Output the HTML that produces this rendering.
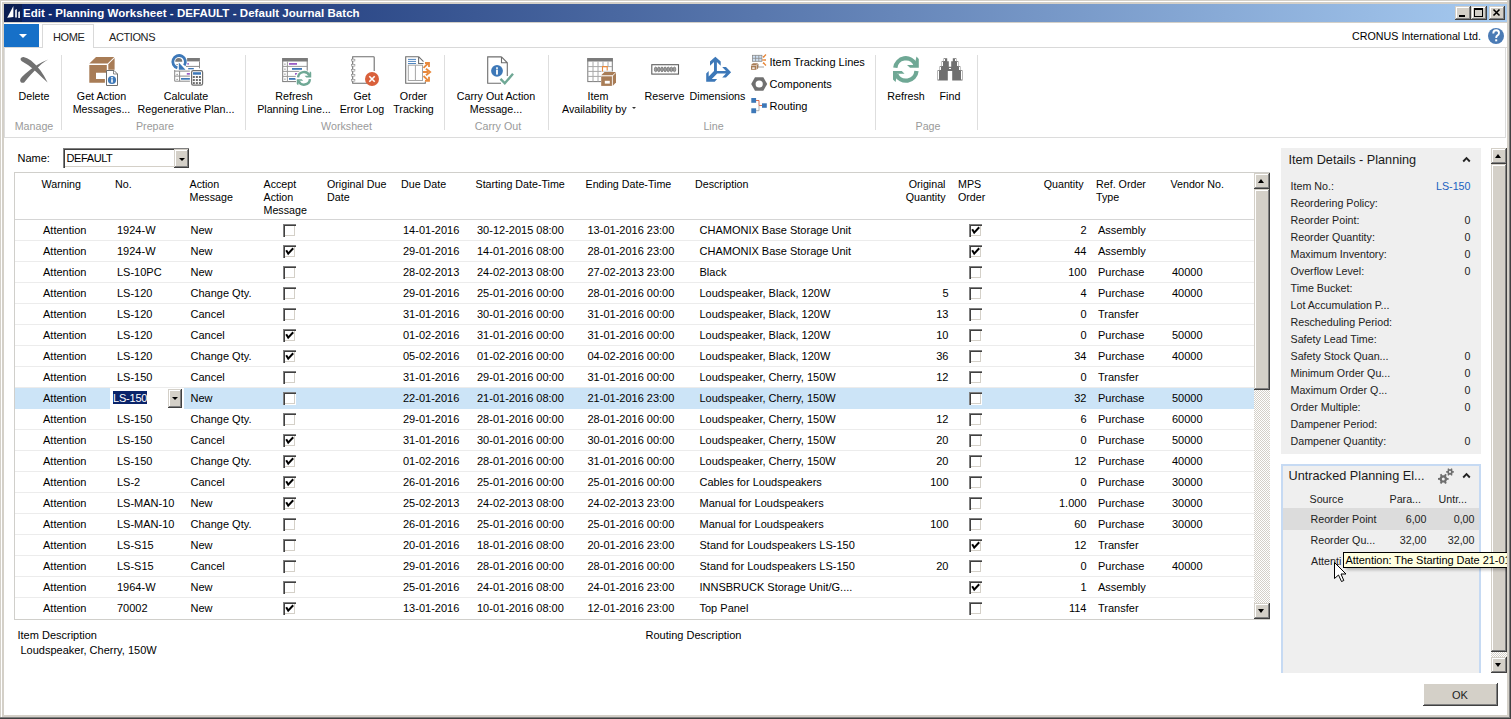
<!DOCTYPE html><html><head><meta charset="utf-8"><style>
html,body{margin:0;padding:0;}
body{width:1511px;height:719px;overflow:hidden;position:relative;background:#d4d0c8;font-family:"Liberation Sans",sans-serif;}
.t{position:absolute;white-space:nowrap;line-height:13px;font-family:"Liberation Sans",sans-serif;}
</style></head><body>
<div style="position:absolute;left:0px;top:0px;width:1511px;height:719px;background:#d4d0c8"></div>
<div style="position:absolute;left:1px;top:1px;width:1508px;height:1px;background:#fff"></div>
<div style="position:absolute;left:1px;top:1px;width:1px;height:716px;background:#fff"></div>
<div style="position:absolute;left:0px;top:717px;width:1511px;height:1px;background:#808080"></div>
<div style="position:absolute;left:0px;top:718px;width:1511px;height:1px;background:#404040"></div>
<div style="position:absolute;left:1509px;top:0px;width:1px;height:718px;background:#808080"></div>
<div style="position:absolute;left:1510px;top:0px;width:1px;height:719px;background:#404040"></div>
<div style="position:absolute;left:4px;top:23px;width:1503px;height:692px;background:#fff"></div>
<div style="position:absolute;left:4px;top:4px;width:1503px;height:18px;background:linear-gradient(to right,#0a246a,#a6caf0)"></div>
<svg style="position:absolute;left:4px;top:4px" width="18" height="18" viewBox="4 4 18 18"><rect x="4" y="4" width="18" height="18" fill="#0b1e52"/><path d="M7.2,17.8 L13.4,6 L13.4,17Z" fill="#fff"/><path d="M15.2,17.5 L15.2,10 L16.8,9 L16.8,17.5Z" fill="#fff"/><path d="M18.3,18 L18.3,12 L19.9,11.2 L19.9,18Z" fill="#fff"/></svg>
<div class="t" style="left:23px;top:7px;font-size:11.5px;color:#fff;font-weight:bold;letter-spacing:0.05px">Edit - Planning Worksheet - DEFAULT - Default Journal Batch</div>
<div style="position:absolute;left:1455px;top:6px;width:16px;height:14px;background:#d4d0c8;box-shadow:inset -1px -1px #404040, inset 1px 1px #d4d0c8, inset -2px -2px #808080, inset 2px 2px #fff;"></div>
<div style="position:absolute;left:1471px;top:6px;width:16px;height:14px;background:#d4d0c8;box-shadow:inset -1px -1px #404040, inset 1px 1px #d4d0c8, inset -2px -2px #808080, inset 2px 2px #fff;"></div>
<div style="position:absolute;left:1489px;top:6px;width:16px;height:14px;background:#d4d0c8;box-shadow:inset -1px -1px #404040, inset 1px 1px #d4d0c8, inset -2px -2px #808080, inset 2px 2px #fff;"></div>
<div style="position:absolute;left:1459px;top:15px;width:6px;height:2px;background:#000"></div>
<div style="position:absolute;left:1474px;top:8px;width:9px;height:9px;border:1px solid #000;border-top-width:2px;box-sizing:border-box"></div>
<svg style="position:absolute;left:1489px;top:6px" width="16" height="14" viewBox="0 0 16 14"><path d="M4.5,3.5 L10.5,9.5 M10.5,3.5 L4.5,9.5" stroke="#000" stroke-width="1.6"/></svg>
<div style="position:absolute;left:4px;top:24px;width:35px;height:23px;background:#1670c8"></div>
<div style="position:absolute;left:18.8px;top:34px;width:0;height:0;border-left:4px solid transparent;border-right:4px solid transparent;border-top:4.5px solid #fff"></div>
<div style="position:absolute;left:4px;top:47px;width:1503px;height:1px;background:#d9d9d9"></div>
<div style="position:absolute;left:42px;top:24px;width:52px;height:24px;background:#fff;border:1px solid #d9d9d9;border-bottom:none;box-sizing:border-box"></div>
<div class="t" style="left:53px;top:31px;font-size:11px;color:#222;font-weight:normal;letter-spacing:-0.4px">HOME</div>
<div class="t" style="left:109px;top:31px;font-size:11px;color:#222;font-weight:normal;letter-spacing:-0.4px">ACTIONS</div>
<div class="t" style="right:30px;top:30px;font-size:10.7px;color:#000;font-weight:normal;">CRONUS International Ltd.</div>
<svg style="position:absolute;left:1486px;top:26px" width="20" height="20" viewBox="1486 26 20 20"><circle cx="1496" cy="36" r="8" fill="#4b7bb5"/><path d="M1493.3,33.5 Q1493.3,30.3 1496.2,30.3 Q1499,30.3 1499,33 Q1499,34.6 1497.2,35.6 Q1496.2,36.3 1496.2,38" fill="none" stroke="#fff" stroke-width="1.9"/><rect x="1495.2" y="39.3" width="2" height="2" fill="#fff"/></svg>
<div style="position:absolute;left:4px;top:47px;width:1502px;height:91px;border:1px solid #dcdcdc;border-top:none;box-sizing:border-box"></div>
<div style="position:absolute;left:61px;top:55px;width:1px;height:75px;background:#dedede"></div>
<div style="position:absolute;left:245px;top:55px;width:1px;height:75px;background:#dedede"></div>
<div style="position:absolute;left:444px;top:55px;width:1px;height:75px;background:#dedede"></div>
<div style="position:absolute;left:548px;top:55px;width:1px;height:75px;background:#dedede"></div>
<div style="position:absolute;left:875px;top:55px;width:1px;height:75px;background:#dedede"></div>
<div style="position:absolute;left:977px;top:55px;width:1px;height:75px;background:#dedede"></div>
<div class="t" style="left:-166px;width:400px;text-align:center;top:119.5px;font-size:10.7px;color:#9a9a9a;font-weight:normal;">Manage</div>
<div class="t" style="left:-45px;width:400px;text-align:center;top:119.5px;font-size:10.7px;color:#9a9a9a;font-weight:normal;">Prepare</div>
<div class="t" style="left:146.5px;width:400px;text-align:center;top:119.5px;font-size:10.7px;color:#9a9a9a;font-weight:normal;">Worksheet</div>
<div class="t" style="left:298px;width:400px;text-align:center;top:119.5px;font-size:10.7px;color:#9a9a9a;font-weight:normal;">Carry Out</div>
<div class="t" style="left:513.5px;width:400px;text-align:center;top:119.5px;font-size:10.7px;color:#9a9a9a;font-weight:normal;">Line</div>
<div class="t" style="left:728px;width:400px;text-align:center;top:119.5px;font-size:10.7px;color:#9a9a9a;font-weight:normal;">Page</div>
<div class="t" style="left:-166px;width:400px;text-align:center;top:90px;font-size:10.7px;color:#000;font-weight:normal;">Delete</div>
<div class="t" style="left:-98.5px;width:400px;text-align:center;top:90px;font-size:10.7px;color:#000;font-weight:normal;">Get Action</div>
<div class="t" style="left:-98.5px;width:400px;text-align:center;top:102.8px;font-size:10.7px;color:#000;font-weight:normal;">Messages...</div>
<div class="t" style="left:-14px;width:400px;text-align:center;top:90px;font-size:10.7px;color:#000;font-weight:normal;">Calculate</div>
<div class="t" style="left:-14px;width:400px;text-align:center;top:102.8px;font-size:10.7px;color:#000;font-weight:normal;">Regenerative Plan...</div>
<div class="t" style="left:94px;width:400px;text-align:center;top:90px;font-size:10.7px;color:#000;font-weight:normal;">Refresh</div>
<div class="t" style="left:94px;width:400px;text-align:center;top:102.8px;font-size:10.7px;color:#000;font-weight:normal;">Planning Line...</div>
<div class="t" style="left:162px;width:400px;text-align:center;top:90px;font-size:10.7px;color:#000;font-weight:normal;">Get</div>
<div class="t" style="left:162px;width:400px;text-align:center;top:102.8px;font-size:10.7px;color:#000;font-weight:normal;">Error Log</div>
<div class="t" style="left:213.5px;width:400px;text-align:center;top:90px;font-size:10.7px;color:#000;font-weight:normal;">Order</div>
<div class="t" style="left:213.5px;width:400px;text-align:center;top:102.8px;font-size:10.7px;color:#000;font-weight:normal;">Tracking</div>
<div class="t" style="left:296px;width:400px;text-align:center;top:90px;font-size:10.7px;color:#000;font-weight:normal;">Carry Out Action</div>
<div class="t" style="left:296px;width:400px;text-align:center;top:102.8px;font-size:10.7px;color:#000;font-weight:normal;">Message...</div>
<div class="t" style="left:398px;width:400px;text-align:center;top:90px;font-size:10.7px;color:#000;font-weight:normal;">Item</div>
<div class="t" style="left:562px;top:102.8px;font-size:10.7px;color:#000;font-weight:normal;">Availability by</div>
<div style="position:absolute;left:632px;top:107px;width:0;height:0;border-left:2px solid transparent;border-right:2px solid transparent;border-top:2px solid #333"></div>
<div class="t" style="left:464.5px;width:400px;text-align:center;top:90px;font-size:10.7px;color:#000;font-weight:normal;">Reserve</div>
<div class="t" style="left:517.5px;width:400px;text-align:center;top:90px;font-size:10.7px;color:#000;font-weight:normal;">Dimensions</div>
<div class="t" style="left:706px;width:400px;text-align:center;top:90px;font-size:10.7px;color:#000;font-weight:normal;">Refresh</div>
<div class="t" style="left:750px;width:400px;text-align:center;top:90px;font-size:10.7px;color:#000;font-weight:normal;">Find</div>
<div class="t" style="left:769.5px;top:56px;font-size:11px;color:#000;font-weight:normal;">Item Tracking Lines</div>
<div class="t" style="left:769.5px;top:78px;font-size:11px;color:#000;font-weight:normal;">Components</div>
<div class="t" style="left:769.5px;top:100px;font-size:11px;color:#000;font-weight:normal;">Routing</div>
<svg style="position:absolute;left:15px;top:52px" width="40" height="36" viewBox="15 52 40 36"><path d="M23.5,56.9 Q27,57.5 31,60.5 Q36,64.5 40.5,70.5 Q44.5,76 47.6,82.6 Q43,78.5 38.5,74 Q33,68.5 28,65 Q24.5,62.7 21.8,61.3 Q20.2,60.2 20.6,58.6 Q21.3,56.8 23.5,56.9Z" fill="#717171"/><path d="M48.2,59.5 Q43,61.5 37.5,64.8 Q30.5,69 25,74 Q21.8,76.8 20.4,79 Q19.6,81 20.8,82.3 Q22.5,83.3 24.2,82.4 Q27,79 30.5,75 Q36,69 41.5,64 Q45,61 48.2,59.5Z" fill="#717171"/></svg>
<svg style="position:absolute;left:84px;top:50px" width="40" height="40" viewBox="84 50 40 40"><path d="M89.3,63.6 L96,57 L114.3,57 L107.6,63.6Z" fill="#a87c56"/><path d="M108.3,64.3 L114.6,58 L114.6,69.7 L108.3,69.7Z" fill="#a87c56"/><path d="M89.3,65 L106.8,65 L106.8,72.8 L96,72.8 L96,79 L104.9,79 L104.9,82.8 L89.3,82.8Z" fill="#a87c56"/><path d="M106.5,70.5 L114,70.5 L117.5,74 L117.5,85.5 L106.5,85.5Z" fill="#fff" stroke="#6e6e6e" stroke-width="1"/><path d="M113.5,70.5 L113.5,74 L117.5,74" fill="none" stroke="#6e6e6e" stroke-width="0.8"/><circle cx="112" cy="80" r="4.1" fill="#3d78b8"/><rect x="111.2" y="77" width="1.6" height="1.5" fill="#fff"/><rect x="111.2" y="79.2" width="1.6" height="3.4" fill="#fff"/></svg>
<svg style="position:absolute;left:166px;top:50px" width="40" height="40" viewBox="166 50 40 40"><rect x="187.1" y="58" width="12.8" height="3.4" fill="#7a7a7a"/><path d="M199.5,61.4 L199.5,68.3 M186,66.4 L199.5,66.4" stroke="#8a8a8a" stroke-width="1" fill="none"/><rect x="187.4" y="63" width="1.4" height="1.7" fill="#9b5cc6"/><rect x="188.2" y="68" width="5.6" height="1.3" fill="#3d78b8"/><path d="M174.7,70 L174.7,81.2 L189.9,81.2 M174.7,71.1 L189.9,71.1 M174.7,76.1 L189.9,76.1 M179.6,71 L179.6,81.2" fill="none" stroke="#8a8a8a" stroke-width="1"/><rect x="186.8" y="73" width="3.1" height="1.7" fill="#9b5cc6"/><rect x="181" y="78" width="8.9" height="1.7" fill="#3d78b8"/><rect x="176.3" y="73.9" width="1.7" height="0.8" fill="#888"/><rect x="176.3" y="78.9" width="1.7" height="0.8" fill="#888"/><rect x="191.6" y="70.6" width="11" height="14.6" rx="1.6" fill="#fff" stroke="#6e6e6e" stroke-width="1.2"/><rect x="193" y="72.2" width="8" height="2.5" fill="#3d78b8"/><rect x="192.8" y="76.0" width="2" height="2" fill="#6a6a6a"/><rect x="192.8" y="79.05" width="2" height="2" fill="#6a6a6a"/><rect x="192.8" y="82.1" width="2" height="2" fill="#6a6a6a"/><rect x="195.85000000000002" y="76.0" width="2" height="2" fill="#6a6a6a"/><rect x="195.85000000000002" y="79.05" width="2" height="2" fill="#6a6a6a"/><rect x="195.85000000000002" y="82.1" width="2" height="2" fill="#6a6a6a"/><rect x="198.9" y="76.0" width="2" height="2" fill="#6a6a6a"/><rect x="198.9" y="79.05" width="2" height="2" fill="#6a6a6a"/><rect x="198.9" y="82.1" width="2" height="2" fill="#6a6a6a"/><path d="M177.4,67.9 A6.3,6.3 0 1,1 184.3,65.4" fill="none" stroke="#3d78b8" stroke-width="2.8"/><path d="M175.2,61.7 A3.5,3.6 0 0,1 182.3,61.7 Z" fill="#7a7a7a"/><path d="M178.8,62.5 L178.8,69.7 L185.5,69.7Z" fill="#3d78b8"/><rect x="176.3" y="64" width="1.7" height="0.8" fill="#888"/></svg>
<svg style="position:absolute;left:278px;top:52px" width="40" height="40" viewBox="278 52 40 40"><rect x="282.7" y="58.6" width="24.5" height="23" fill="#fff" stroke="#7a7a7a" stroke-width="1"/><rect x="282.2" y="58.1" width="25.5" height="3.4" fill="#7a7a7a"/><path d="M282.7,66.4 L307.2,66.4 M282.7,71.4 L307.2,71.4 M282.7,76.4 L307.2,76.4 M287.4,61.5 L287.4,81.6" stroke="#9a9a9a" stroke-width="1"/><rect x="284" y="63.7" width="1.8" height="0.8" fill="#8a8a8a"/><rect x="284" y="68.7" width="1.8" height="0.8" fill="#8a8a8a"/><rect x="284" y="73.7" width="1.8" height="0.8" fill="#8a8a8a"/><rect x="284" y="78.7" width="1.8" height="0.8" fill="#8a8a8a"/><rect x="289" y="63" width="8" height="1.8" fill="#9b5cc6"/><rect x="292" y="68" width="10" height="1.8" fill="#3d78b8"/><rect x="295" y="73" width="3" height="1.8" fill="#9b5cc6"/><rect x="289" y="78" width="7" height="1.8" fill="#3d78b8"/><circle cx="304" cy="78.3" r="8.6" fill="#fff"/><g transform="translate(304,78.3) scale(0.56) translate(-905.9,-69.4)"><path d="M895.3,67.8 A10.6,10.6 0 0,1 915.5,64.5" fill="none" stroke="#6fa895" stroke-width="4.3"/><path d="M916.5,56.6 L918.8,59 L918.8,67.8 L910,67.8 L907,65 L914.5,65Z" fill="#6fa895"/><path d="M916.5,71 A10.6,10.6 0 0,1 896.2,74.3" fill="none" stroke="#6fa895" stroke-width="4.3"/><path d="M895.6,82 L893,79.5 L893,71 L901.8,71 L904.5,73.8 L897,73.8Z" fill="#6fa895"/></g></svg>
<svg style="position:absolute;left:345px;top:52px" width="40" height="40" viewBox="345 52 40 40"><path d="M368,83.2 L352.7,83.2 L352.7,56.7 L373.5,56.7 Q374.2,56.7 374.2,57.5 L374.2,71" fill="none" stroke="#6e6e6e" stroke-width="1.1"/><rect x="351.5" y="59.2" width="3.4" height="1.8" fill="#fff" stroke="#8a8a8a" stroke-width="0.6"/><rect x="351.5" y="64.3" width="3.4" height="1.8" fill="#fff" stroke="#8a8a8a" stroke-width="0.6"/><rect x="351.5" y="69.3" width="3.4" height="1.8" fill="#fff" stroke="#8a8a8a" stroke-width="0.6"/><rect x="351.5" y="74.3" width="3.4" height="1.8" fill="#fff" stroke="#8a8a8a" stroke-width="0.6"/><rect x="351.5" y="79.3" width="3.4" height="1.8" fill="#fff" stroke="#8a8a8a" stroke-width="0.6"/><circle cx="372" cy="79" r="7" fill="#d9603b"/><path d="M369.3,76.3 L374.7,81.7 M374.7,76.3 L369.3,81.7" stroke="#fff" stroke-width="1.6"/></svg>
<svg style="position:absolute;left:398px;top:52px" width="40" height="40" viewBox="398 52 40 40"><path d="M418.6,56.7 L405.7,56.7 L405.7,83.2 L425.3,83.2 L425.3,81.5 M418.6,56.7 L423.5,61.7 M418.6,56.7 L418.6,63.5 L423.5,63.5" fill="none" stroke="#6e6e6e" stroke-width="1.1"/><path d="M408,59.4 L416,59.4 M408,61.4 L416,61.4 M408,63.5 L416,63.5" stroke="#3d78b8" stroke-width="0.9"/><rect x="408.3" y="65.2" width="14.2" height="15.3" fill="none" stroke="#a5a5a5" stroke-width="1"/><path d="M415.4,65.2 L415.4,80.5" stroke="#a5a5a5" stroke-width="1"/><path d="M423.5,67.8 L428.5,63 M425,63 L429,63 L429,67" fill="none" stroke="#e8893c" stroke-width="1.8"/><path d="M423,72 L428,72 M426,68.8 L430,72 L426,75.2" fill="none" stroke="#e8893c" stroke-width="2"/><path d="M423.5,76 L428.5,80.8 M425,80.8 L429,80.8 L429,76.8" fill="none" stroke="#e8893c" stroke-width="1.8"/></svg>
<svg style="position:absolute;left:480px;top:50px" width="40" height="40" viewBox="480 50 40 40"><path d="M501.5,56.9 L487.7,56.9 L487.7,83.2 L501,83.2 M501.5,56.9 L507.3,62.8 L507.3,76 M501.5,56.9 L501.5,62.8 L507.3,62.8" fill="none" stroke="#6e6e6e" stroke-width="1.1"/><circle cx="497" cy="70.8" r="5.9" fill="#3d78b8"/><rect x="496.1" y="67.3" width="1.8" height="1.6" fill="#fff"/><rect x="496.1" y="69.6" width="1.8" height="5" fill="#fff"/><path d="M500.5,78.8 L504.8,83.3 L513,73.8" fill="none" stroke="#6fa895" stroke-width="2.4"/></svg>
<svg style="position:absolute;left:582px;top:52px" width="40" height="40" viewBox="582 52 40 40"><rect x="587.8" y="58.6" width="24.5" height="23" fill="#fff" stroke="#7a7a7a" stroke-width="1"/><rect x="587.3" y="58.1" width="25.5" height="3.4" fill="#7a7a7a"/><path d="M588,66.6 L612,66.6 M588,71.4 L612,71.4 M588,76.4 L604,76.4 M593,61.5 L593,81.6 M598,61.5 L598,81.6 M603,61.5 L603,66 M608,61.5 L608,66" stroke="#a8a8a8" stroke-width="1"/><rect x="601" y="71.5" width="15.5" height="15" fill="#fff"/><path d="M602.5,71.5 L602.5,66.6 L607.2,66.6 L607.2,70.5" fill="none" stroke="#e8893c" stroke-width="1.1"/><path d="M601.2,75.2 L604.5,72 L616,72 L612.5,75.2Z" fill="#a87c56"/><path d="M612.8,76 L616,72.8 L616,82.5 L612.8,85.8Z" fill="#a87c56"/><rect x="601.2" y="76.3" width="10.7" height="9.6" fill="#a87c56"/><rect x="604.8" y="80.8" width="5" height="2.8" fill="#fff"/></svg>
<svg style="position:absolute;left:645px;top:52px" width="40" height="40" viewBox="645 52 40 40"><rect x="651.8" y="64.7" width="26.7" height="9.4" fill="#fff" stroke="#5e5e5e" stroke-width="1.1"/><ellipse cx="655.7" cy="69.4" rx="1.35" ry="2.4" fill="#a0a0a0" stroke="#5a5a5a" stroke-width="0.6"/><ellipse cx="658.83" cy="69.4" rx="1.35" ry="2.4" fill="#a0a0a0" stroke="#5a5a5a" stroke-width="0.6"/><ellipse cx="661.96" cy="69.4" rx="1.35" ry="2.4" fill="#a0a0a0" stroke="#5a5a5a" stroke-width="0.6"/><ellipse cx="665.09" cy="69.4" rx="1.35" ry="2.4" fill="#a0a0a0" stroke="#5a5a5a" stroke-width="0.6"/><ellipse cx="668.22" cy="69.4" rx="1.35" ry="2.4" fill="#a0a0a0" stroke="#5a5a5a" stroke-width="0.6"/><ellipse cx="671.35" cy="69.4" rx="1.35" ry="2.4" fill="#a0a0a0" stroke="#5a5a5a" stroke-width="0.6"/><ellipse cx="674.48" cy="69.4" rx="1.35" ry="2.4" fill="#a0a0a0" stroke="#5a5a5a" stroke-width="0.6"/></svg>
<svg style="position:absolute;left:700px;top:52px" width="36" height="36" viewBox="700 52 36 36"><polygon points="715.35,56.67 720.7,61.57 720.7,65.8 716.9,62 716.9,71.1 726,71.1 722.2,67.1 726,67.1 731.1,72.25 726,77.6 722.2,77.6 726,73.6 717.2,73.6 711.8,79.1 717.1,79.1 714.7,81.8 706.2,81.8 706.2,73.4 708.7,70.9 708.7,76.4 714,71.1 714,62 710,65.8 710,61.57" fill="#3d78b8"/></svg>
<svg style="position:absolute;left:748px;top:52px" width="22" height="20" viewBox="748 52 22 20"><rect x="752.5" y="55.3" width="9.4" height="6" fill="#cfe0f2" stroke="#8a8a8a" stroke-width="0.8"/><path d="M755.6,55.3 L755.6,61.3 M758.8,55.3 L758.8,61.3 M752.5,58.3 L761.9,58.3 M758,64 L758,67 L764,67" fill="none" stroke="#8a8a8a" stroke-width="0.8"/><path d="M751,65 L753,63.2 L758.2,63.2 L756.2,65Z" fill="#a87c56"/><rect x="751" y="65.5" width="5.2" height="4.3" fill="#a87c56"/><rect x="752.2" y="67.4" width="2.5" height="1.4" fill="#fff"/><path d="M756.6,65.4 L758.2,63.8 L758.2,68.2 L756.6,69.8Z" fill="#a87c56"/><path d="M766,54.5 L763.3,57.2 M766,60 L763.3,60 M766,65.5 L763.3,62.8" stroke="#e8893c" stroke-width="1.3"/><path d="M762.5,56 L763.5,58 L765,56.5Z M762.3,59 L764,60 L762.3,61Z M762.5,64 L763.5,62 L765,63.5Z" fill="#e8893c"/></svg>
<svg style="position:absolute;left:748px;top:74px" width="22" height="20" viewBox="748 74 22 20"><path d="M755,77.3 L763.3,77.3 L767.2,84 L763.3,90.7 L755,90.7 L751.2,84Z" fill="#707070"/><circle cx="759.2" cy="84" r="3.6" fill="#fff"/></svg>
<svg style="position:absolute;left:748px;top:96px" width="22" height="20" viewBox="748 96 22 20"><path d="M756,100.5 L759,100.5 L759,105.5 L762,105.5" fill="none" stroke="#d9603b" stroke-width="0.9"/><path d="M756,110.7 L759,110.7 L759,105.5" fill="none" stroke="#aaa" stroke-width="0.9"/><rect x="751.3" y="98" width="4.8" height="4.8" fill="#3d78b8"/><rect x="762" y="103.3" width="4.8" height="4.5" fill="#3d78b8"/><rect x="751.3" y="108.3" width="4.8" height="4.9" fill="#3d78b8"/></svg>
<svg style="position:absolute;left:886px;top:50px" width="40" height="40" viewBox="886 50 40 40"><path d="M895.3,67.8 A10.6,10.6 0 0,1 915.5,64.5" fill="none" stroke="#6fa895" stroke-width="4.3"/><path d="M916.5,56.6 L918.8,59 L918.8,67.8 L910,67.8 L907,65 L914.5,65Z" fill="#6fa895"/><path d="M916.5,71 A10.6,10.6 0 0,1 896.2,74.3" fill="none" stroke="#6fa895" stroke-width="4.3"/><path d="M895.6,82 L893,79.5 L893,71 L901.8,71 L904.5,73.8 L897,73.8Z" fill="#6fa895"/></svg>
<svg style="position:absolute;left:930px;top:50px" width="40" height="40" viewBox="930 50 40 40"><path d="M937.5,80.5 L937.5,70.2 L939.6,70.2 L939.6,66.2 L941.6,66.2 L941.6,61.2 L943.6,61.2 L943.6,58.2 L947.2,58.2 L947.2,61.2 L948.8,61.2 L948.8,66.7 L951.2,66.7 L951.2,61.2 L952.8,61.2 L952.8,58.2 L956.4,58.2 L956.4,61.2 L958.4,61.2 L958.4,66.2 L960.4,66.2 L960.4,70.2 L962.5,70.2 L962.5,80.5 L952.2,80.5 L952.2,71 L947.8,71 L947.8,80.5Z" fill="#707070"/><path d="M938.5,71 L938.5,79.5 M940.5,67 L940.5,70 M942.5,62 L942.5,66 M944.5,59 L944.5,61 M955.5,59 L955.5,61 M957.5,62 L957.5,66 M959.5,67 L959.5,70 M961.5,71 L961.5,79.5" stroke="#fff" stroke-width="1"/><rect x="949" y="68" width="2" height="1" fill="#fff"/></svg>
<div class="t" style="left:17.5px;top:152px;font-size:11px;color:#000;font-weight:normal;">Name:</div>
<div style="position:absolute;left:63px;top:148px;width:126px;height:20px;background:#fff;box-shadow:inset 1px 1px #808080, inset 2px 2px #404040, inset -1px -1px #fff, inset -2px -2px #d4d0c8"></div>
<div class="t" style="left:66.5px;top:152px;font-size:11px;color:#000;font-weight:normal;letter-spacing:-0.4px">DEFAULT</div>
<div style="position:absolute;left:174px;top:149px;width:15px;height:19px;background:#d4d0c8;box-shadow:inset -1px -1px #404040, inset 1px 1px #d4d0c8, inset -2px -2px #808080, inset 2px 2px #fff;"></div>
<div style="position:absolute;left:178.5px;top:157.5px;width:0;height:0;border-left:3px solid transparent;border-right:3px solid transparent;border-top:3px solid #000"></div>
<div style="position:absolute;left:14px;top:172px;width:1256px;height:448px;background:#fff;border:1px solid #d0cfcb;box-sizing:border-box"></div>
<div style="position:absolute;left:15px;top:219px;width:1239px;height:1px;background:#d5d5d5"></div>
<div class="t" style="left:41.5px;top:177.5px;font-size:10.7px;color:#000;font-weight:normal;">Warning</div>
<div class="t" style="left:115px;top:177.5px;font-size:10.7px;color:#000;font-weight:normal;">No.</div>
<div class="t" style="left:189.5px;top:177.5px;font-size:10.7px;color:#000;font-weight:normal;">Action</div>
<div class="t" style="left:189.5px;top:190.5px;font-size:10.7px;color:#000;font-weight:normal;">Message</div>
<div class="t" style="left:263.5px;top:177.5px;font-size:10.7px;color:#000;font-weight:normal;">Accept</div>
<div class="t" style="left:263.5px;top:190.5px;font-size:10.7px;color:#000;font-weight:normal;">Action</div>
<div class="t" style="left:263.5px;top:203.5px;font-size:10.7px;color:#000;font-weight:normal;">Message</div>
<div class="t" style="left:327px;top:177.5px;font-size:10.7px;color:#000;font-weight:normal;">Original Due</div>
<div class="t" style="left:327px;top:190.5px;font-size:10.7px;color:#000;font-weight:normal;">Date</div>
<div class="t" style="left:401px;top:177.5px;font-size:10.7px;color:#000;font-weight:normal;">Due Date</div>
<div class="t" style="left:475.5px;top:177.5px;font-size:10.7px;color:#000;font-weight:normal;">Starting Date-Time</div>
<div class="t" style="left:585.5px;top:177.5px;font-size:10.7px;color:#000;font-weight:normal;">Ending Date-Time</div>
<div class="t" style="left:695px;top:177.5px;font-size:10.7px;color:#000;font-weight:normal;">Description</div>
<div class="t" style="left:958px;top:177.5px;font-size:10.7px;color:#000;font-weight:normal;">MPS</div>
<div class="t" style="left:958px;top:190.5px;font-size:10.7px;color:#000;font-weight:normal;">Order</div>
<div class="t" style="left:1096px;top:177.5px;font-size:10.7px;color:#000;font-weight:normal;">Ref. Order</div>
<div class="t" style="left:1096px;top:190.5px;font-size:10.7px;color:#000;font-weight:normal;">Type</div>
<div class="t" style="left:1170.5px;top:177.5px;font-size:10.7px;color:#000;font-weight:normal;">Vendor No.</div>
<div class="t" style="right:565.5px;top:177.5px;font-size:10.7px;color:#000;font-weight:normal;">Original</div>
<div class="t" style="right:565.5px;top:190.5px;font-size:10.7px;color:#000;font-weight:normal;">Quantity</div>
<div class="t" style="right:427.5px;top:177.5px;font-size:10.7px;color:#000;font-weight:normal;">Quantity</div>
<div style="position:absolute;left:15px;top:240px;width:1239px;height:1px;background:#ececec"></div>
<div class="t" style="left:43px;top:224px;font-size:11px;color:#000;font-weight:normal;">Attention</div>
<div class="t" style="left:117px;top:224px;font-size:11px;color:#000;font-weight:normal;">1924-W</div>
<div class="t" style="left:190.5px;top:224px;font-size:11px;color:#000;font-weight:normal;">New</div>
<div style="position:absolute;left:283px;top:224px;width:13px;height:13px;background:#fff;box-shadow:inset 1px 1px #808080, inset 2px 2px #404040, inset -1px -1px #fff, inset -2px -2px #d4d0c8"></div>
<div class="t" style="left:403px;top:224px;font-size:11px;color:#000;font-weight:normal;">14-01-2016</div>
<div class="t" style="left:477px;top:224px;font-size:11px;color:#000;font-weight:normal;">30-12-2015 08:00</div>
<div class="t" style="left:587.5px;top:224px;font-size:11px;color:#000;font-weight:normal;">13-01-2016 23:00</div>
<div class="t" style="left:699.5px;top:224px;font-size:11px;color:#000;font-weight:normal;">CHAMONIX Base Storage Unit</div>
<div style="position:absolute;left:969px;top:224px;width:13px;height:13px;background:#fff;box-shadow:inset 1px 1px #808080, inset 2px 2px #404040, inset -1px -1px #fff, inset -2px -2px #d4d0c8"></div><svg style="position:absolute;left:969px;top:224px" width="13" height="13" viewBox="0 0 13 13"><path d="M3.2,5.3 L5.2,8.6 L10.2,3.2" fill="none" stroke="#000" stroke-width="2"/></svg>
<div class="t" style="right:424.5px;top:224px;font-size:11px;color:#000;font-weight:normal;">2</div>
<div class="t" style="left:1098px;top:224px;font-size:11px;color:#000;font-weight:normal;">Assembly</div>
<div style="position:absolute;left:15px;top:261px;width:1239px;height:1px;background:#ececec"></div>
<div class="t" style="left:43px;top:245px;font-size:11px;color:#000;font-weight:normal;">Attention</div>
<div class="t" style="left:117px;top:245px;font-size:11px;color:#000;font-weight:normal;">1924-W</div>
<div class="t" style="left:190.5px;top:245px;font-size:11px;color:#000;font-weight:normal;">New</div>
<div style="position:absolute;left:283px;top:245px;width:13px;height:13px;background:#fff;box-shadow:inset 1px 1px #808080, inset 2px 2px #404040, inset -1px -1px #fff, inset -2px -2px #d4d0c8"></div><svg style="position:absolute;left:283px;top:245px" width="13" height="13" viewBox="0 0 13 13"><path d="M3.2,5.3 L5.2,8.6 L10.2,3.2" fill="none" stroke="#000" stroke-width="2"/></svg>
<div class="t" style="left:403px;top:245px;font-size:11px;color:#000;font-weight:normal;">29-01-2016</div>
<div class="t" style="left:477px;top:245px;font-size:11px;color:#000;font-weight:normal;">14-01-2016 08:00</div>
<div class="t" style="left:587.5px;top:245px;font-size:11px;color:#000;font-weight:normal;">28-01-2016 23:00</div>
<div class="t" style="left:699.5px;top:245px;font-size:11px;color:#000;font-weight:normal;">CHAMONIX Base Storage Unit</div>
<div style="position:absolute;left:969px;top:245px;width:13px;height:13px;background:#fff;box-shadow:inset 1px 1px #808080, inset 2px 2px #404040, inset -1px -1px #fff, inset -2px -2px #d4d0c8"></div><svg style="position:absolute;left:969px;top:245px" width="13" height="13" viewBox="0 0 13 13"><path d="M3.2,5.3 L5.2,8.6 L10.2,3.2" fill="none" stroke="#000" stroke-width="2"/></svg>
<div class="t" style="right:424.5px;top:245px;font-size:11px;color:#000;font-weight:normal;">44</div>
<div class="t" style="left:1098px;top:245px;font-size:11px;color:#000;font-weight:normal;">Assembly</div>
<div style="position:absolute;left:15px;top:282px;width:1239px;height:1px;background:#ececec"></div>
<div class="t" style="left:43px;top:266px;font-size:11px;color:#000;font-weight:normal;">Attention</div>
<div class="t" style="left:117px;top:266px;font-size:11px;color:#000;font-weight:normal;">LS-10PC</div>
<div class="t" style="left:190.5px;top:266px;font-size:11px;color:#000;font-weight:normal;">New</div>
<div style="position:absolute;left:283px;top:266px;width:13px;height:13px;background:#fff;box-shadow:inset 1px 1px #808080, inset 2px 2px #404040, inset -1px -1px #fff, inset -2px -2px #d4d0c8"></div>
<div class="t" style="left:403px;top:266px;font-size:11px;color:#000;font-weight:normal;">28-02-2013</div>
<div class="t" style="left:477px;top:266px;font-size:11px;color:#000;font-weight:normal;">24-02-2013 08:00</div>
<div class="t" style="left:587.5px;top:266px;font-size:11px;color:#000;font-weight:normal;">27-02-2013 23:00</div>
<div class="t" style="left:699.5px;top:266px;font-size:11px;color:#000;font-weight:normal;">Black</div>
<div style="position:absolute;left:969px;top:266px;width:13px;height:13px;background:#fff;box-shadow:inset 1px 1px #808080, inset 2px 2px #404040, inset -1px -1px #fff, inset -2px -2px #d4d0c8"></div>
<div class="t" style="right:424.5px;top:266px;font-size:11px;color:#000;font-weight:normal;">100</div>
<div class="t" style="left:1098px;top:266px;font-size:11px;color:#000;font-weight:normal;">Purchase</div>
<div class="t" style="left:1172px;top:266px;font-size:11px;color:#000;font-weight:normal;">40000</div>
<div style="position:absolute;left:15px;top:303px;width:1239px;height:1px;background:#ececec"></div>
<div class="t" style="left:43px;top:287px;font-size:11px;color:#000;font-weight:normal;">Attention</div>
<div class="t" style="left:117px;top:287px;font-size:11px;color:#000;font-weight:normal;">LS-120</div>
<div class="t" style="left:190.5px;top:287px;font-size:11px;color:#000;font-weight:normal;">Change Qty.</div>
<div style="position:absolute;left:283px;top:287px;width:13px;height:13px;background:#fff;box-shadow:inset 1px 1px #808080, inset 2px 2px #404040, inset -1px -1px #fff, inset -2px -2px #d4d0c8"></div>
<div class="t" style="left:403px;top:287px;font-size:11px;color:#000;font-weight:normal;">29-01-2016</div>
<div class="t" style="left:477px;top:287px;font-size:11px;color:#000;font-weight:normal;">25-01-2016 00:00</div>
<div class="t" style="left:587.5px;top:287px;font-size:11px;color:#000;font-weight:normal;">28-01-2016 00:00</div>
<div class="t" style="left:699.5px;top:287px;font-size:11px;color:#000;font-weight:normal;">Loudspeaker, Black, 120W</div>
<div class="t" style="right:562.5px;top:287px;font-size:11px;color:#000;font-weight:normal;">5</div>
<div style="position:absolute;left:969px;top:287px;width:13px;height:13px;background:#fff;box-shadow:inset 1px 1px #808080, inset 2px 2px #404040, inset -1px -1px #fff, inset -2px -2px #d4d0c8"></div>
<div class="t" style="right:424.5px;top:287px;font-size:11px;color:#000;font-weight:normal;">4</div>
<div class="t" style="left:1098px;top:287px;font-size:11px;color:#000;font-weight:normal;">Purchase</div>
<div class="t" style="left:1172px;top:287px;font-size:11px;color:#000;font-weight:normal;">40000</div>
<div style="position:absolute;left:15px;top:324px;width:1239px;height:1px;background:#ececec"></div>
<div class="t" style="left:43px;top:308px;font-size:11px;color:#000;font-weight:normal;">Attention</div>
<div class="t" style="left:117px;top:308px;font-size:11px;color:#000;font-weight:normal;">LS-120</div>
<div class="t" style="left:190.5px;top:308px;font-size:11px;color:#000;font-weight:normal;">Cancel</div>
<div style="position:absolute;left:283px;top:308px;width:13px;height:13px;background:#fff;box-shadow:inset 1px 1px #808080, inset 2px 2px #404040, inset -1px -1px #fff, inset -2px -2px #d4d0c8"></div>
<div class="t" style="left:403px;top:308px;font-size:11px;color:#000;font-weight:normal;">31-01-2016</div>
<div class="t" style="left:477px;top:308px;font-size:11px;color:#000;font-weight:normal;">30-01-2016 00:00</div>
<div class="t" style="left:587.5px;top:308px;font-size:11px;color:#000;font-weight:normal;">31-01-2016 00:00</div>
<div class="t" style="left:699.5px;top:308px;font-size:11px;color:#000;font-weight:normal;">Loudspeaker, Black, 120W</div>
<div class="t" style="right:562.5px;top:308px;font-size:11px;color:#000;font-weight:normal;">13</div>
<div style="position:absolute;left:969px;top:308px;width:13px;height:13px;background:#fff;box-shadow:inset 1px 1px #808080, inset 2px 2px #404040, inset -1px -1px #fff, inset -2px -2px #d4d0c8"></div>
<div class="t" style="right:424.5px;top:308px;font-size:11px;color:#000;font-weight:normal;">0</div>
<div class="t" style="left:1098px;top:308px;font-size:11px;color:#000;font-weight:normal;">Transfer</div>
<div style="position:absolute;left:15px;top:345px;width:1239px;height:1px;background:#ececec"></div>
<div class="t" style="left:43px;top:329px;font-size:11px;color:#000;font-weight:normal;">Attention</div>
<div class="t" style="left:117px;top:329px;font-size:11px;color:#000;font-weight:normal;">LS-120</div>
<div class="t" style="left:190.5px;top:329px;font-size:11px;color:#000;font-weight:normal;">Cancel</div>
<div style="position:absolute;left:283px;top:329px;width:13px;height:13px;background:#fff;box-shadow:inset 1px 1px #808080, inset 2px 2px #404040, inset -1px -1px #fff, inset -2px -2px #d4d0c8"></div><svg style="position:absolute;left:283px;top:329px" width="13" height="13" viewBox="0 0 13 13"><path d="M3.2,5.3 L5.2,8.6 L10.2,3.2" fill="none" stroke="#000" stroke-width="2"/></svg>
<div class="t" style="left:403px;top:329px;font-size:11px;color:#000;font-weight:normal;">01-02-2016</div>
<div class="t" style="left:477px;top:329px;font-size:11px;color:#000;font-weight:normal;">31-01-2016 00:00</div>
<div class="t" style="left:587.5px;top:329px;font-size:11px;color:#000;font-weight:normal;">31-01-2016 00:00</div>
<div class="t" style="left:699.5px;top:329px;font-size:11px;color:#000;font-weight:normal;">Loudspeaker, Black, 120W</div>
<div class="t" style="right:562.5px;top:329px;font-size:11px;color:#000;font-weight:normal;">10</div>
<div style="position:absolute;left:969px;top:329px;width:13px;height:13px;background:#fff;box-shadow:inset 1px 1px #808080, inset 2px 2px #404040, inset -1px -1px #fff, inset -2px -2px #d4d0c8"></div>
<div class="t" style="right:424.5px;top:329px;font-size:11px;color:#000;font-weight:normal;">0</div>
<div class="t" style="left:1098px;top:329px;font-size:11px;color:#000;font-weight:normal;">Purchase</div>
<div class="t" style="left:1172px;top:329px;font-size:11px;color:#000;font-weight:normal;">50000</div>
<div style="position:absolute;left:15px;top:366px;width:1239px;height:1px;background:#ececec"></div>
<div class="t" style="left:43px;top:350px;font-size:11px;color:#000;font-weight:normal;">Attention</div>
<div class="t" style="left:117px;top:350px;font-size:11px;color:#000;font-weight:normal;">LS-120</div>
<div class="t" style="left:190.5px;top:350px;font-size:11px;color:#000;font-weight:normal;">Change Qty.</div>
<div style="position:absolute;left:283px;top:350px;width:13px;height:13px;background:#fff;box-shadow:inset 1px 1px #808080, inset 2px 2px #404040, inset -1px -1px #fff, inset -2px -2px #d4d0c8"></div><svg style="position:absolute;left:283px;top:350px" width="13" height="13" viewBox="0 0 13 13"><path d="M3.2,5.3 L5.2,8.6 L10.2,3.2" fill="none" stroke="#000" stroke-width="2"/></svg>
<div class="t" style="left:403px;top:350px;font-size:11px;color:#000;font-weight:normal;">05-02-2016</div>
<div class="t" style="left:477px;top:350px;font-size:11px;color:#000;font-weight:normal;">01-02-2016 00:00</div>
<div class="t" style="left:587.5px;top:350px;font-size:11px;color:#000;font-weight:normal;">04-02-2016 00:00</div>
<div class="t" style="left:699.5px;top:350px;font-size:11px;color:#000;font-weight:normal;">Loudspeaker, Black, 120W</div>
<div class="t" style="right:562.5px;top:350px;font-size:11px;color:#000;font-weight:normal;">36</div>
<div style="position:absolute;left:969px;top:350px;width:13px;height:13px;background:#fff;box-shadow:inset 1px 1px #808080, inset 2px 2px #404040, inset -1px -1px #fff, inset -2px -2px #d4d0c8"></div>
<div class="t" style="right:424.5px;top:350px;font-size:11px;color:#000;font-weight:normal;">34</div>
<div class="t" style="left:1098px;top:350px;font-size:11px;color:#000;font-weight:normal;">Purchase</div>
<div class="t" style="left:1172px;top:350px;font-size:11px;color:#000;font-weight:normal;">40000</div>
<div style="position:absolute;left:15px;top:387px;width:1239px;height:1px;background:#ececec"></div>
<div class="t" style="left:43px;top:371px;font-size:11px;color:#000;font-weight:normal;">Attention</div>
<div class="t" style="left:117px;top:371px;font-size:11px;color:#000;font-weight:normal;">LS-150</div>
<div class="t" style="left:190.5px;top:371px;font-size:11px;color:#000;font-weight:normal;">Cancel</div>
<div style="position:absolute;left:283px;top:371px;width:13px;height:13px;background:#fff;box-shadow:inset 1px 1px #808080, inset 2px 2px #404040, inset -1px -1px #fff, inset -2px -2px #d4d0c8"></div>
<div class="t" style="left:403px;top:371px;font-size:11px;color:#000;font-weight:normal;">31-01-2016</div>
<div class="t" style="left:477px;top:371px;font-size:11px;color:#000;font-weight:normal;">29-01-2016 00:00</div>
<div class="t" style="left:587.5px;top:371px;font-size:11px;color:#000;font-weight:normal;">31-01-2016 00:00</div>
<div class="t" style="left:699.5px;top:371px;font-size:11px;color:#000;font-weight:normal;">Loudspeaker, Cherry, 150W</div>
<div class="t" style="right:562.5px;top:371px;font-size:11px;color:#000;font-weight:normal;">12</div>
<div style="position:absolute;left:969px;top:371px;width:13px;height:13px;background:#fff;box-shadow:inset 1px 1px #808080, inset 2px 2px #404040, inset -1px -1px #fff, inset -2px -2px #d4d0c8"></div>
<div class="t" style="right:424.5px;top:371px;font-size:11px;color:#000;font-weight:normal;">0</div>
<div class="t" style="left:1098px;top:371px;font-size:11px;color:#000;font-weight:normal;">Transfer</div>
<div style="position:absolute;left:15px;top:388px;width:1239px;height:21px;background:#cce4f7"></div>
<div class="t" style="left:43px;top:392px;font-size:11px;color:#000;font-weight:normal;">Attention</div>
<div style="position:absolute;left:110px;top:388px;width:74px;height:21px;background:#fff"></div>
<div style="position:absolute;left:113px;top:391px;width:34px;height:13px;background:#0a246a"></div>
<div class="t" style="left:113px;top:392px;font-size:11px;color:#fff;font-weight:normal;letter-spacing:-0.2px">LS-150</div>
<div style="position:absolute;left:168px;top:389px;width:14px;height:19px;background:#d4d0c8;box-shadow:inset -1px -1px #404040, inset 1px 1px #d4d0c8, inset -2px -2px #808080, inset 2px 2px #fff;"></div>
<div style="position:absolute;left:172px;top:397px;width:0;height:0;border-left:3px solid transparent;border-right:3px solid transparent;border-top:3px solid #000"></div>
<div class="t" style="left:190.5px;top:392px;font-size:11px;color:#000;font-weight:normal;">New</div>
<div style="position:absolute;left:283px;top:392px;width:13px;height:13px;background:#fff;box-shadow:inset 1px 1px #808080, inset 2px 2px #404040, inset -1px -1px #fff, inset -2px -2px #d4d0c8"></div>
<div class="t" style="left:403px;top:392px;font-size:11px;color:#000;font-weight:normal;">22-01-2016</div>
<div class="t" style="left:477px;top:392px;font-size:11px;color:#000;font-weight:normal;">21-01-2016 08:00</div>
<div class="t" style="left:587.5px;top:392px;font-size:11px;color:#000;font-weight:normal;">21-01-2016 23:00</div>
<div class="t" style="left:699.5px;top:392px;font-size:11px;color:#000;font-weight:normal;">Loudspeaker, Cherry, 150W</div>
<div style="position:absolute;left:969px;top:392px;width:13px;height:13px;background:#fff;box-shadow:inset 1px 1px #808080, inset 2px 2px #404040, inset -1px -1px #fff, inset -2px -2px #d4d0c8"></div>
<div class="t" style="right:424.5px;top:392px;font-size:11px;color:#000;font-weight:normal;">32</div>
<div class="t" style="left:1098px;top:392px;font-size:11px;color:#000;font-weight:normal;">Purchase</div>
<div class="t" style="left:1172px;top:392px;font-size:11px;color:#000;font-weight:normal;">50000</div>
<div style="position:absolute;left:15px;top:429px;width:1239px;height:1px;background:#ececec"></div>
<div class="t" style="left:43px;top:413px;font-size:11px;color:#000;font-weight:normal;">Attention</div>
<div class="t" style="left:117px;top:413px;font-size:11px;color:#000;font-weight:normal;">LS-150</div>
<div class="t" style="left:190.5px;top:413px;font-size:11px;color:#000;font-weight:normal;">Change Qty.</div>
<div style="position:absolute;left:283px;top:413px;width:13px;height:13px;background:#fff;box-shadow:inset 1px 1px #808080, inset 2px 2px #404040, inset -1px -1px #fff, inset -2px -2px #d4d0c8"></div>
<div class="t" style="left:403px;top:413px;font-size:11px;color:#000;font-weight:normal;">29-01-2016</div>
<div class="t" style="left:477px;top:413px;font-size:11px;color:#000;font-weight:normal;">28-01-2016 00:00</div>
<div class="t" style="left:587.5px;top:413px;font-size:11px;color:#000;font-weight:normal;">28-01-2016 00:00</div>
<div class="t" style="left:699.5px;top:413px;font-size:11px;color:#000;font-weight:normal;">Loudspeaker, Cherry, 150W</div>
<div class="t" style="right:562.5px;top:413px;font-size:11px;color:#000;font-weight:normal;">12</div>
<div style="position:absolute;left:969px;top:413px;width:13px;height:13px;background:#fff;box-shadow:inset 1px 1px #808080, inset 2px 2px #404040, inset -1px -1px #fff, inset -2px -2px #d4d0c8"></div>
<div class="t" style="right:424.5px;top:413px;font-size:11px;color:#000;font-weight:normal;">6</div>
<div class="t" style="left:1098px;top:413px;font-size:11px;color:#000;font-weight:normal;">Purchase</div>
<div class="t" style="left:1172px;top:413px;font-size:11px;color:#000;font-weight:normal;">60000</div>
<div style="position:absolute;left:15px;top:450px;width:1239px;height:1px;background:#ececec"></div>
<div class="t" style="left:43px;top:434px;font-size:11px;color:#000;font-weight:normal;">Attention</div>
<div class="t" style="left:117px;top:434px;font-size:11px;color:#000;font-weight:normal;">LS-150</div>
<div class="t" style="left:190.5px;top:434px;font-size:11px;color:#000;font-weight:normal;">Cancel</div>
<div style="position:absolute;left:283px;top:434px;width:13px;height:13px;background:#fff;box-shadow:inset 1px 1px #808080, inset 2px 2px #404040, inset -1px -1px #fff, inset -2px -2px #d4d0c8"></div><svg style="position:absolute;left:283px;top:434px" width="13" height="13" viewBox="0 0 13 13"><path d="M3.2,5.3 L5.2,8.6 L10.2,3.2" fill="none" stroke="#000" stroke-width="2"/></svg>
<div class="t" style="left:403px;top:434px;font-size:11px;color:#000;font-weight:normal;">31-01-2016</div>
<div class="t" style="left:477px;top:434px;font-size:11px;color:#000;font-weight:normal;">30-01-2016 00:00</div>
<div class="t" style="left:587.5px;top:434px;font-size:11px;color:#000;font-weight:normal;">30-01-2016 00:00</div>
<div class="t" style="left:699.5px;top:434px;font-size:11px;color:#000;font-weight:normal;">Loudspeaker, Cherry, 150W</div>
<div class="t" style="right:562.5px;top:434px;font-size:11px;color:#000;font-weight:normal;">20</div>
<div style="position:absolute;left:969px;top:434px;width:13px;height:13px;background:#fff;box-shadow:inset 1px 1px #808080, inset 2px 2px #404040, inset -1px -1px #fff, inset -2px -2px #d4d0c8"></div>
<div class="t" style="right:424.5px;top:434px;font-size:11px;color:#000;font-weight:normal;">0</div>
<div class="t" style="left:1098px;top:434px;font-size:11px;color:#000;font-weight:normal;">Purchase</div>
<div class="t" style="left:1172px;top:434px;font-size:11px;color:#000;font-weight:normal;">50000</div>
<div style="position:absolute;left:15px;top:471px;width:1239px;height:1px;background:#ececec"></div>
<div class="t" style="left:43px;top:455px;font-size:11px;color:#000;font-weight:normal;">Attention</div>
<div class="t" style="left:117px;top:455px;font-size:11px;color:#000;font-weight:normal;">LS-150</div>
<div class="t" style="left:190.5px;top:455px;font-size:11px;color:#000;font-weight:normal;">Change Qty.</div>
<div style="position:absolute;left:283px;top:455px;width:13px;height:13px;background:#fff;box-shadow:inset 1px 1px #808080, inset 2px 2px #404040, inset -1px -1px #fff, inset -2px -2px #d4d0c8"></div><svg style="position:absolute;left:283px;top:455px" width="13" height="13" viewBox="0 0 13 13"><path d="M3.2,5.3 L5.2,8.6 L10.2,3.2" fill="none" stroke="#000" stroke-width="2"/></svg>
<div class="t" style="left:403px;top:455px;font-size:11px;color:#000;font-weight:normal;">01-02-2016</div>
<div class="t" style="left:477px;top:455px;font-size:11px;color:#000;font-weight:normal;">28-01-2016 00:00</div>
<div class="t" style="left:587.5px;top:455px;font-size:11px;color:#000;font-weight:normal;">31-01-2016 00:00</div>
<div class="t" style="left:699.5px;top:455px;font-size:11px;color:#000;font-weight:normal;">Loudspeaker, Cherry, 150W</div>
<div class="t" style="right:562.5px;top:455px;font-size:11px;color:#000;font-weight:normal;">20</div>
<div style="position:absolute;left:969px;top:455px;width:13px;height:13px;background:#fff;box-shadow:inset 1px 1px #808080, inset 2px 2px #404040, inset -1px -1px #fff, inset -2px -2px #d4d0c8"></div>
<div class="t" style="right:424.5px;top:455px;font-size:11px;color:#000;font-weight:normal;">12</div>
<div class="t" style="left:1098px;top:455px;font-size:11px;color:#000;font-weight:normal;">Purchase</div>
<div class="t" style="left:1172px;top:455px;font-size:11px;color:#000;font-weight:normal;">40000</div>
<div style="position:absolute;left:15px;top:492px;width:1239px;height:1px;background:#ececec"></div>
<div class="t" style="left:43px;top:476px;font-size:11px;color:#000;font-weight:normal;">Attention</div>
<div class="t" style="left:117px;top:476px;font-size:11px;color:#000;font-weight:normal;">LS-2</div>
<div class="t" style="left:190.5px;top:476px;font-size:11px;color:#000;font-weight:normal;">Cancel</div>
<div style="position:absolute;left:283px;top:476px;width:13px;height:13px;background:#fff;box-shadow:inset 1px 1px #808080, inset 2px 2px #404040, inset -1px -1px #fff, inset -2px -2px #d4d0c8"></div><svg style="position:absolute;left:283px;top:476px" width="13" height="13" viewBox="0 0 13 13"><path d="M3.2,5.3 L5.2,8.6 L10.2,3.2" fill="none" stroke="#000" stroke-width="2"/></svg>
<div class="t" style="left:403px;top:476px;font-size:11px;color:#000;font-weight:normal;">26-01-2016</div>
<div class="t" style="left:477px;top:476px;font-size:11px;color:#000;font-weight:normal;">25-01-2016 00:00</div>
<div class="t" style="left:587.5px;top:476px;font-size:11px;color:#000;font-weight:normal;">25-01-2016 00:00</div>
<div class="t" style="left:699.5px;top:476px;font-size:11px;color:#000;font-weight:normal;">Cables for Loudspeakers</div>
<div class="t" style="right:562.5px;top:476px;font-size:11px;color:#000;font-weight:normal;">100</div>
<div style="position:absolute;left:969px;top:476px;width:13px;height:13px;background:#fff;box-shadow:inset 1px 1px #808080, inset 2px 2px #404040, inset -1px -1px #fff, inset -2px -2px #d4d0c8"></div>
<div class="t" style="right:424.5px;top:476px;font-size:11px;color:#000;font-weight:normal;">0</div>
<div class="t" style="left:1098px;top:476px;font-size:11px;color:#000;font-weight:normal;">Purchase</div>
<div class="t" style="left:1172px;top:476px;font-size:11px;color:#000;font-weight:normal;">30000</div>
<div style="position:absolute;left:15px;top:513px;width:1239px;height:1px;background:#ececec"></div>
<div class="t" style="left:43px;top:497px;font-size:11px;color:#000;font-weight:normal;">Attention</div>
<div class="t" style="left:117px;top:497px;font-size:11px;color:#000;font-weight:normal;">LS-MAN-10</div>
<div class="t" style="left:190.5px;top:497px;font-size:11px;color:#000;font-weight:normal;">New</div>
<div style="position:absolute;left:283px;top:497px;width:13px;height:13px;background:#fff;box-shadow:inset 1px 1px #808080, inset 2px 2px #404040, inset -1px -1px #fff, inset -2px -2px #d4d0c8"></div><svg style="position:absolute;left:283px;top:497px" width="13" height="13" viewBox="0 0 13 13"><path d="M3.2,5.3 L5.2,8.6 L10.2,3.2" fill="none" stroke="#000" stroke-width="2"/></svg>
<div class="t" style="left:403px;top:497px;font-size:11px;color:#000;font-weight:normal;">25-02-2013</div>
<div class="t" style="left:477px;top:497px;font-size:11px;color:#000;font-weight:normal;">24-02-2013 08:00</div>
<div class="t" style="left:587.5px;top:497px;font-size:11px;color:#000;font-weight:normal;">24-02-2013 23:00</div>
<div class="t" style="left:699.5px;top:497px;font-size:11px;color:#000;font-weight:normal;">Manual for Loudspeakers</div>
<div style="position:absolute;left:969px;top:497px;width:13px;height:13px;background:#fff;box-shadow:inset 1px 1px #808080, inset 2px 2px #404040, inset -1px -1px #fff, inset -2px -2px #d4d0c8"></div>
<div class="t" style="right:424.5px;top:497px;font-size:11px;color:#000;font-weight:normal;">1.000</div>
<div class="t" style="left:1098px;top:497px;font-size:11px;color:#000;font-weight:normal;">Purchase</div>
<div class="t" style="left:1172px;top:497px;font-size:11px;color:#000;font-weight:normal;">30000</div>
<div style="position:absolute;left:15px;top:534px;width:1239px;height:1px;background:#ececec"></div>
<div class="t" style="left:43px;top:518px;font-size:11px;color:#000;font-weight:normal;">Attention</div>
<div class="t" style="left:117px;top:518px;font-size:11px;color:#000;font-weight:normal;">LS-MAN-10</div>
<div class="t" style="left:190.5px;top:518px;font-size:11px;color:#000;font-weight:normal;">Change Qty.</div>
<div style="position:absolute;left:283px;top:518px;width:13px;height:13px;background:#fff;box-shadow:inset 1px 1px #808080, inset 2px 2px #404040, inset -1px -1px #fff, inset -2px -2px #d4d0c8"></div>
<div class="t" style="left:403px;top:518px;font-size:11px;color:#000;font-weight:normal;">26-01-2016</div>
<div class="t" style="left:477px;top:518px;font-size:11px;color:#000;font-weight:normal;">25-01-2016 00:00</div>
<div class="t" style="left:587.5px;top:518px;font-size:11px;color:#000;font-weight:normal;">25-01-2016 00:00</div>
<div class="t" style="left:699.5px;top:518px;font-size:11px;color:#000;font-weight:normal;">Manual for Loudspeakers</div>
<div class="t" style="right:562.5px;top:518px;font-size:11px;color:#000;font-weight:normal;">100</div>
<div style="position:absolute;left:969px;top:518px;width:13px;height:13px;background:#fff;box-shadow:inset 1px 1px #808080, inset 2px 2px #404040, inset -1px -1px #fff, inset -2px -2px #d4d0c8"></div>
<div class="t" style="right:424.5px;top:518px;font-size:11px;color:#000;font-weight:normal;">60</div>
<div class="t" style="left:1098px;top:518px;font-size:11px;color:#000;font-weight:normal;">Purchase</div>
<div class="t" style="left:1172px;top:518px;font-size:11px;color:#000;font-weight:normal;">30000</div>
<div style="position:absolute;left:15px;top:555px;width:1239px;height:1px;background:#ececec"></div>
<div class="t" style="left:43px;top:539px;font-size:11px;color:#000;font-weight:normal;">Attention</div>
<div class="t" style="left:117px;top:539px;font-size:11px;color:#000;font-weight:normal;">LS-S15</div>
<div class="t" style="left:190.5px;top:539px;font-size:11px;color:#000;font-weight:normal;">New</div>
<div style="position:absolute;left:283px;top:539px;width:13px;height:13px;background:#fff;box-shadow:inset 1px 1px #808080, inset 2px 2px #404040, inset -1px -1px #fff, inset -2px -2px #d4d0c8"></div>
<div class="t" style="left:403px;top:539px;font-size:11px;color:#000;font-weight:normal;">20-01-2016</div>
<div class="t" style="left:477px;top:539px;font-size:11px;color:#000;font-weight:normal;">18-01-2016 08:00</div>
<div class="t" style="left:587.5px;top:539px;font-size:11px;color:#000;font-weight:normal;">20-01-2016 23:00</div>
<div class="t" style="left:699.5px;top:539px;font-size:11px;color:#000;font-weight:normal;">Stand for Loudspeakers LS-150</div>
<div style="position:absolute;left:969px;top:539px;width:13px;height:13px;background:#fff;box-shadow:inset 1px 1px #808080, inset 2px 2px #404040, inset -1px -1px #fff, inset -2px -2px #d4d0c8"></div><svg style="position:absolute;left:969px;top:539px" width="13" height="13" viewBox="0 0 13 13"><path d="M3.2,5.3 L5.2,8.6 L10.2,3.2" fill="none" stroke="#000" stroke-width="2"/></svg>
<div class="t" style="right:424.5px;top:539px;font-size:11px;color:#000;font-weight:normal;">12</div>
<div class="t" style="left:1098px;top:539px;font-size:11px;color:#000;font-weight:normal;">Transfer</div>
<div style="position:absolute;left:15px;top:576px;width:1239px;height:1px;background:#ececec"></div>
<div class="t" style="left:43px;top:560px;font-size:11px;color:#000;font-weight:normal;">Attention</div>
<div class="t" style="left:117px;top:560px;font-size:11px;color:#000;font-weight:normal;">LS-S15</div>
<div class="t" style="left:190.5px;top:560px;font-size:11px;color:#000;font-weight:normal;">Cancel</div>
<div style="position:absolute;left:283px;top:560px;width:13px;height:13px;background:#fff;box-shadow:inset 1px 1px #808080, inset 2px 2px #404040, inset -1px -1px #fff, inset -2px -2px #d4d0c8"></div>
<div class="t" style="left:403px;top:560px;font-size:11px;color:#000;font-weight:normal;">29-01-2016</div>
<div class="t" style="left:477px;top:560px;font-size:11px;color:#000;font-weight:normal;">28-01-2016 00:00</div>
<div class="t" style="left:587.5px;top:560px;font-size:11px;color:#000;font-weight:normal;">28-01-2016 00:00</div>
<div class="t" style="left:699.5px;top:560px;font-size:11px;color:#000;font-weight:normal;">Stand for Loudspeakers LS-150</div>
<div class="t" style="right:562.5px;top:560px;font-size:11px;color:#000;font-weight:normal;">20</div>
<div style="position:absolute;left:969px;top:560px;width:13px;height:13px;background:#fff;box-shadow:inset 1px 1px #808080, inset 2px 2px #404040, inset -1px -1px #fff, inset -2px -2px #d4d0c8"></div>
<div class="t" style="right:424.5px;top:560px;font-size:11px;color:#000;font-weight:normal;">0</div>
<div class="t" style="left:1098px;top:560px;font-size:11px;color:#000;font-weight:normal;">Purchase</div>
<div class="t" style="left:1172px;top:560px;font-size:11px;color:#000;font-weight:normal;">40000</div>
<div style="position:absolute;left:15px;top:597px;width:1239px;height:1px;background:#ececec"></div>
<div class="t" style="left:43px;top:581px;font-size:11px;color:#000;font-weight:normal;">Attention</div>
<div class="t" style="left:117px;top:581px;font-size:11px;color:#000;font-weight:normal;">1964-W</div>
<div class="t" style="left:190.5px;top:581px;font-size:11px;color:#000;font-weight:normal;">New</div>
<div style="position:absolute;left:283px;top:581px;width:13px;height:13px;background:#fff;box-shadow:inset 1px 1px #808080, inset 2px 2px #404040, inset -1px -1px #fff, inset -2px -2px #d4d0c8"></div>
<div class="t" style="left:403px;top:581px;font-size:11px;color:#000;font-weight:normal;">25-01-2016</div>
<div class="t" style="left:477px;top:581px;font-size:11px;color:#000;font-weight:normal;">24-01-2016 08:00</div>
<div class="t" style="left:587.5px;top:581px;font-size:11px;color:#000;font-weight:normal;">24-01-2016 23:00</div>
<div class="t" style="left:699.5px;top:581px;font-size:11px;color:#000;font-weight:normal;">INNSBRUCK Storage Unit/G....</div>
<div style="position:absolute;left:969px;top:581px;width:13px;height:13px;background:#fff;box-shadow:inset 1px 1px #808080, inset 2px 2px #404040, inset -1px -1px #fff, inset -2px -2px #d4d0c8"></div><svg style="position:absolute;left:969px;top:581px" width="13" height="13" viewBox="0 0 13 13"><path d="M3.2,5.3 L5.2,8.6 L10.2,3.2" fill="none" stroke="#000" stroke-width="2"/></svg>
<div class="t" style="right:424.5px;top:581px;font-size:11px;color:#000;font-weight:normal;">1</div>
<div class="t" style="left:1098px;top:581px;font-size:11px;color:#000;font-weight:normal;">Assembly</div>
<div class="t" style="left:43px;top:602px;font-size:11px;color:#000;font-weight:normal;">Attention</div>
<div class="t" style="left:117px;top:602px;font-size:11px;color:#000;font-weight:normal;">70002</div>
<div class="t" style="left:190.5px;top:602px;font-size:11px;color:#000;font-weight:normal;">New</div>
<div style="position:absolute;left:283px;top:602px;width:13px;height:13px;background:#fff;box-shadow:inset 1px 1px #808080, inset 2px 2px #404040, inset -1px -1px #fff, inset -2px -2px #d4d0c8"></div><svg style="position:absolute;left:283px;top:602px" width="13" height="13" viewBox="0 0 13 13"><path d="M3.2,5.3 L5.2,8.6 L10.2,3.2" fill="none" stroke="#000" stroke-width="2"/></svg>
<div class="t" style="left:403px;top:602px;font-size:11px;color:#000;font-weight:normal;">13-01-2016</div>
<div class="t" style="left:477px;top:602px;font-size:11px;color:#000;font-weight:normal;">10-01-2016 08:00</div>
<div class="t" style="left:587.5px;top:602px;font-size:11px;color:#000;font-weight:normal;">12-01-2016 23:00</div>
<div class="t" style="left:699.5px;top:602px;font-size:11px;color:#000;font-weight:normal;">Top Panel</div>
<div style="position:absolute;left:969px;top:602px;width:13px;height:13px;background:#fff;box-shadow:inset 1px 1px #808080, inset 2px 2px #404040, inset -1px -1px #fff, inset -2px -2px #d4d0c8"></div>
<div class="t" style="right:424.5px;top:602px;font-size:11px;color:#000;font-weight:normal;">114</div>
<div class="t" style="left:1098px;top:602px;font-size:11px;color:#000;font-weight:normal;">Transfer</div>
<div style="position:absolute;left:1254px;top:173px;width:16px;height:446px;background-color:#fff;background-image:repeating-conic-gradient(#d4d0c8 0 25%, #ffffff 0 50%);background-size:2px 2px;"></div>
<div style="position:absolute;left:1254px;top:173px;width:16px;height:16px;background:#d4d0c8;box-shadow:inset -1px -1px #404040, inset 1px 1px #d4d0c8, inset -2px -2px #808080, inset 2px 2px #fff;"></div>
<div style="position:absolute;left:1258.0px;top:179px;width:0;height:0;border-left:3.5px solid transparent;border-right:3.5px solid transparent;border-bottom:4px solid #000"></div>
<div style="position:absolute;left:1254px;top:189px;width:16px;height:201px;background:#d4d0c8;box-shadow:inset -1px -1px #404040, inset 1px 1px #d4d0c8, inset -2px -2px #808080, inset 2px 2px #fff;"></div>
<div style="position:absolute;left:1254px;top:603px;width:16px;height:16px;background:#d4d0c8;box-shadow:inset -1px -1px #404040, inset 1px 1px #d4d0c8, inset -2px -2px #808080, inset 2px 2px #fff;"></div>
<div style="position:absolute;left:1258.0px;top:609px;width:0;height:0;border-left:3.5px solid transparent;border-right:3.5px solid transparent;border-top:4px solid #000"></div>
<div class="t" style="left:17.5px;top:629px;font-size:11px;color:#000;font-weight:normal;">Item Description</div>
<div class="t" style="left:20.5px;top:643.5px;font-size:11px;color:#000;font-weight:normal;">Loudspeaker, Cherry, 150W</div>
<div class="t" style="left:645.5px;top:629px;font-size:11px;color:#000;font-weight:normal;">Routing Description</div>
<div style="position:absolute;left:1281px;top:148px;width:200px;height:306px;background:#efefef"></div>
<div class="t" style="left:1288.5px;top:154px;font-size:12.7px;color:#1a1a1a;font-weight:normal;">Item Details - Planning</div>
<svg style="position:absolute;left:1460px;top:154px" width="12" height="10" viewBox="0 0 12 10"><path d="M3.2,7.5 L6.5,4.2 L9.8,7.5" fill="none" stroke="#222" stroke-width="1.9"/></svg>
<div class="t" style="left:1290.5px;top:180.3px;font-size:10.7px;color:#222;font-weight:normal;">Item No.:</div>
<div class="t" style="right:40.5px;top:180.3px;font-size:10.7px;color:#1a5fc0;font-weight:normal;">LS-150</div>
<div class="t" style="left:1290.5px;top:197.3px;font-size:10.7px;color:#222;font-weight:normal;">Reordering Policy:</div>
<div class="t" style="left:1290.5px;top:214.3px;font-size:10.7px;color:#222;font-weight:normal;">Reorder Point:</div>
<div class="t" style="right:40.5px;top:214.3px;font-size:10.7px;color:#222;font-weight:normal;">0</div>
<div class="t" style="left:1290.5px;top:231.3px;font-size:10.7px;color:#222;font-weight:normal;">Reorder Quantity:</div>
<div class="t" style="right:40.5px;top:231.3px;font-size:10.7px;color:#222;font-weight:normal;">0</div>
<div class="t" style="left:1290.5px;top:248.3px;font-size:10.7px;color:#222;font-weight:normal;">Maximum Inventory:</div>
<div class="t" style="right:40.5px;top:248.3px;font-size:10.7px;color:#222;font-weight:normal;">0</div>
<div class="t" style="left:1290.5px;top:265.3px;font-size:10.7px;color:#222;font-weight:normal;">Overflow Level:</div>
<div class="t" style="right:40.5px;top:265.3px;font-size:10.7px;color:#222;font-weight:normal;">0</div>
<div class="t" style="left:1290.5px;top:282.3px;font-size:10.7px;color:#222;font-weight:normal;">Time Bucket:</div>
<div class="t" style="left:1290.5px;top:299.3px;font-size:10.7px;color:#222;font-weight:normal;">Lot Accumulation P...</div>
<div class="t" style="left:1290.5px;top:316.3px;font-size:10.7px;color:#222;font-weight:normal;">Rescheduling Period:</div>
<div class="t" style="left:1290.5px;top:333.3px;font-size:10.7px;color:#222;font-weight:normal;">Safety Lead Time:</div>
<div class="t" style="left:1290.5px;top:350.3px;font-size:10.7px;color:#222;font-weight:normal;">Safety Stock Quan...</div>
<div class="t" style="right:40.5px;top:350.3px;font-size:10.7px;color:#222;font-weight:normal;">0</div>
<div class="t" style="left:1290.5px;top:367.3px;font-size:10.7px;color:#222;font-weight:normal;">Minimum Order Qu...</div>
<div class="t" style="right:40.5px;top:367.3px;font-size:10.7px;color:#222;font-weight:normal;">0</div>
<div class="t" style="left:1290.5px;top:384.3px;font-size:10.7px;color:#222;font-weight:normal;">Maximum Order Q...</div>
<div class="t" style="right:40.5px;top:384.3px;font-size:10.7px;color:#222;font-weight:normal;">0</div>
<div class="t" style="left:1290.5px;top:401.3px;font-size:10.7px;color:#222;font-weight:normal;">Order Multiple:</div>
<div class="t" style="right:40.5px;top:401.3px;font-size:10.7px;color:#222;font-weight:normal;">0</div>
<div class="t" style="left:1290.5px;top:418.3px;font-size:10.7px;color:#222;font-weight:normal;">Dampener Period:</div>
<div class="t" style="left:1290.5px;top:435.3px;font-size:10.7px;color:#222;font-weight:normal;">Dampener Quantity:</div>
<div class="t" style="right:40.5px;top:435.3px;font-size:10.7px;color:#222;font-weight:normal;">0</div>
<div style="position:absolute;left:1281px;top:464px;width:200px;height:209px;background:#efefef;border:2px solid #c6daf3;border-bottom:none;box-sizing:border-box"></div>
<div class="t" style="left:1288.5px;top:470px;font-size:12.7px;color:#1a1a1a;font-weight:normal;">Untracked Planning El...</div>
<svg style="position:absolute;left:1434px;top:464px" width="22" height="22" viewBox="1434 464 22 22"><circle cx="1443.3" cy="478.9" r="2.6" fill="none" stroke="#6e6e6e" stroke-width="2.2"/><path d="M1445.90,478.90 L1448.60,478.90" stroke="#6e6e6e" stroke-width="1.9"/><path d="M1444.60,481.15 L1445.95,483.49" stroke="#6e6e6e" stroke-width="1.9"/><path d="M1442.00,481.15 L1440.65,483.49" stroke="#6e6e6e" stroke-width="1.9"/><path d="M1440.70,478.90 L1438.00,478.90" stroke="#6e6e6e" stroke-width="1.9"/><path d="M1442.00,476.65 L1440.65,474.31" stroke="#6e6e6e" stroke-width="1.9"/><path d="M1444.60,476.65 L1445.95,474.31" stroke="#6e6e6e" stroke-width="1.9"/><circle cx="1450" cy="471.9" r="1.9" fill="none" stroke="#6e6e6e" stroke-width="1.7"/><path d="M1451.90,471.90 L1453.90,471.90" stroke="#6e6e6e" stroke-width="1.5"/><path d="M1450.95,473.55 L1451.95,475.28" stroke="#6e6e6e" stroke-width="1.5"/><path d="M1449.05,473.55 L1448.05,475.28" stroke="#6e6e6e" stroke-width="1.5"/><path d="M1448.10,471.90 L1446.10,471.90" stroke="#6e6e6e" stroke-width="1.5"/><path d="M1449.05,470.25 L1448.05,468.52" stroke="#6e6e6e" stroke-width="1.5"/><path d="M1450.95,470.25 L1451.95,468.52" stroke="#6e6e6e" stroke-width="1.5"/></svg>
<svg style="position:absolute;left:1460px;top:470px" width="12" height="10" viewBox="0 0 12 10"><path d="M3.2,7.5 L6.5,4.2 L9.8,7.5" fill="none" stroke="#222" stroke-width="1.9"/></svg>
<div class="t" style="left:1309.5px;top:493px;font-size:10.7px;color:#222;font-weight:normal;">Source</div>
<div class="t" style="left:1389.5px;top:493px;font-size:10.7px;color:#222;font-weight:normal;">Para...</div>
<div class="t" style="left:1438.5px;top:493px;font-size:10.7px;color:#222;font-weight:normal;">Untr...</div>
<div style="position:absolute;left:1283px;top:508px;width:196px;height:22px;background:#dcdcdc"></div>
<div class="t" style="left:1310.5px;top:513px;font-size:10.7px;color:#222;font-weight:normal;">Reorder Point</div>
<div class="t" style="right:84.5px;top:513px;font-size:10.7px;color:#222;font-weight:normal;">6,00</div>
<div class="t" style="right:36.5px;top:513px;font-size:10.7px;color:#222;font-weight:normal;">0,00</div>
<div class="t" style="left:1310.5px;top:534px;font-size:10.7px;color:#222;font-weight:normal;">Reorder Qu...</div>
<div class="t" style="right:84.5px;top:534px;font-size:10.7px;color:#222;font-weight:normal;">32,00</div>
<div class="t" style="right:36.5px;top:534px;font-size:10.7px;color:#222;font-weight:normal;">32,00</div>
<div class="t" style="left:1311px;top:555px;font-size:10.7px;color:#222;font-weight:normal;">Attenti</div>
<div style="position:absolute;left:1491px;top:148px;width:16px;height:525px;background-color:#fff;background-image:repeating-conic-gradient(#d4d0c8 0 25%, #ffffff 0 50%);background-size:2px 2px;"></div>
<div style="position:absolute;left:1491px;top:148px;width:16px;height:16px;background:#d4d0c8;box-shadow:inset -1px -1px #404040, inset 1px 1px #d4d0c8, inset -2px -2px #808080, inset 2px 2px #fff;"></div>
<div style="position:absolute;left:1495.0px;top:154px;width:0;height:0;border-left:3.5px solid transparent;border-right:3.5px solid transparent;border-bottom:4px solid #000"></div>
<div style="position:absolute;left:1491px;top:164px;width:16px;height:488px;background:#d4d0c8;box-shadow:inset -1px -1px #404040, inset 1px 1px #d4d0c8, inset -2px -2px #808080, inset 2px 2px #fff;"></div>
<div style="position:absolute;left:1491px;top:657px;width:16px;height:16px;background:#d4d0c8;box-shadow:inset -1px -1px #404040, inset 1px 1px #d4d0c8, inset -2px -2px #808080, inset 2px 2px #fff;"></div>
<div style="position:absolute;left:1495.0px;top:663px;width:0;height:0;border-left:3.5px solid transparent;border-right:3.5px solid transparent;border-top:4px solid #000"></div>
<div style="position:absolute;left:1346px;top:555px;width:170px;height:15px;background:rgba(0,0,0,0.25);filter:blur(1.5px)"></div>
<div style="position:absolute;left:1343px;top:552px;width:170px;height:16px;background:#ffffe1;border:1px solid #000;box-sizing:border-box"></div>
<div class="t" style="left:1345.5px;top:554px;font-size:11px;color:#000;font-weight:normal;letter-spacing:-0.05px">Attention: The Starting Date 21-01-2016</div>
<svg style="position:absolute;left:1330px;top:558px" width="20" height="26" viewBox="1330 558 20 26"><path d="M1334.5,562.5 L1334.5,578.5 L1338.5,575 L1341.5,581.5 L1343.8,580.5 L1341,574 L1346,574Z" fill="#fff" stroke="#000" stroke-width="1" stroke-linejoin="miter"/></svg>
<div style="position:absolute;left:1423px;top:683px;width:75px;height:23px;background:#d4d0c8;box-shadow:inset -1px -1px #404040, inset 1px 1px #fff, inset -2px -2px #808080"></div>
<div class="t" style="left:1260px;width:400px;text-align:center;top:689px;font-size:11px;color:#222;font-weight:normal;">OK</div>
<div style="position:absolute;left:1507px;top:0px;width:2px;height:717px;background:#d4d0c8"></div>
<div style="position:absolute;left:1509px;top:0px;width:1px;height:718px;background:#808080"></div>
<div style="position:absolute;left:1510px;top:0px;width:1px;height:719px;background:#404040"></div>
</body></html>
